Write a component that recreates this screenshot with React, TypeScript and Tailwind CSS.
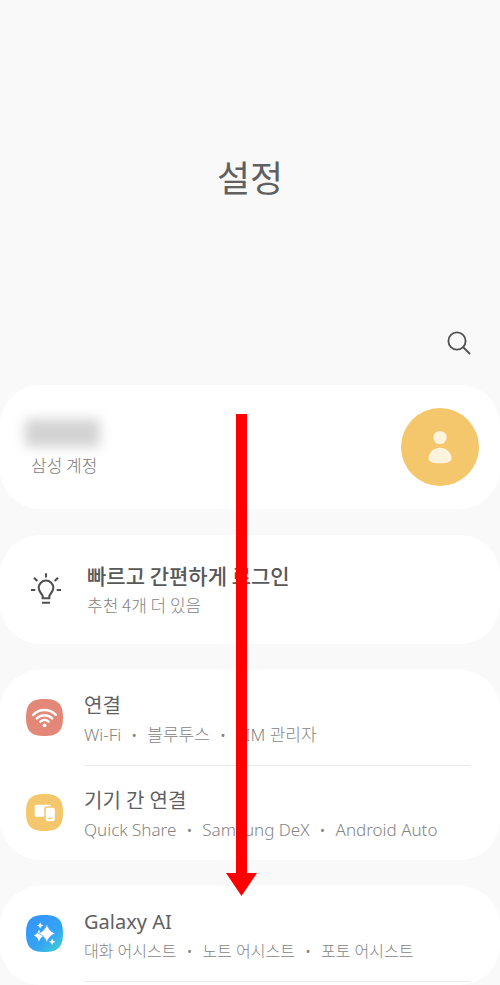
import { Fragment, ReactNode } from "react";

interface SettingItemProps {
  icon: ReactNode;
  title: string;
  details: string[];
  small?: boolean;
  divider?: boolean;
}

function Card({ children, className = "" }: { children: ReactNode; className?: string }) {
  return (
    <section className={`w-full rounded-[40px] bg-white ${className}`}>
      {children}
    </section>
  );
}

function SettingItem({ icon, title, details, small, divider }: SettingItemProps) {
  return (
    <li className="font-['Noto_Sans','Noto_Sans_CJK_KR',sans-serif]">
      <a href="#" className="flex h-[95px] items-center gap-[21px] pl-[26px] pr-[30px]">
        {icon}
        <div className="min-w-0 flex-1 whitespace-nowrap pt-[7px]">
          <p className="text-xl leading-7 font-normal text-[#606060]">{title}</p>
          <p
            className={`flex leading-[30px] text-[#848484] ${
              small ? "text-[16px]" : "text-[17px]"
            }`}
          >
            {details.map((detail, index) => (
              <Fragment key={detail}>
                {index > 0 && <span className="w-[26px] text-center">•</span>}
                <span>{detail}</span>
              </Fragment>
            ))}
          </p>
        </div>
      </a>
      {divider && <hr className="-mb-px ml-[84px] mr-[30px] border-[#ebebeb]" />}
    </li>
  );
}

// rounded "squircle" behind every coloured icon
const TILE = "M18.5 0C32 0 37 5 37 18.5S32 37 18.5 37 0 32 0 18.5 5 0 18.5 0Z";

function WifiIcon() {
  return (
    <svg className="size-[37px] shrink-0" viewBox="0 0 37 37" fill="none">
      <path d={TILE} fill="#e38878" />
      <g stroke="#fff" strokeWidth="2.5" strokeLinecap="round">
        <path d="M7.2 15.8C13.5 9.3 23.5 9.3 29.8 15.8" />
        <path d="M10.8 19.3C15 15.1 22 15.1 26.2 19.3" />
        <path d="M14.4 22.7C16.7 20.5 20.3 20.5 22.6 22.7" />
      </g>
      <circle cx="18.5" cy="26.3" r="1.9" fill="#fff" />
    </svg>
  );
}

function DevicesIcon() {
  return (
    <svg className="size-[37px] shrink-0" viewBox="0 0 37 37" fill="none">
      <path d={TILE} fill="#f5c76c" />
      <rect x="8.7" y="10.8" width="16.5" height="12" rx="1.6" fill="#fff" />
      <rect x="18.2" y="12.2" width="12.2" height="16.5" rx="3.4" fill="#f5c76c" />
      <rect x="19.7" y="13.7" width="9.2" height="13.5" rx="2.2" fill="#fff" />
      <path d="M22.9 24.4h2.8" stroke="#f5c76c" strokeWidth="1.3" strokeLinecap="round" />
    </svg>
  );
}

function GalaxyAiIcon() {
  return (
    <svg className="size-[37px] shrink-0" viewBox="0 0 37 37" fill="none">
      <defs>
        <linearGradient id="galaxy" x1="8" y1="4" x2="34" y2="35" gradientUnits="userSpaceOnUse">
          <stop stopColor="#3397fa" />
          <stop offset="0.6" stopColor="#35a5f5" />
          <stop offset="1" stopColor="#40d0d0" />
        </linearGradient>
      </defs>
      <path d={TILE} fill="url(#galaxy)" />
      <g fill="#fff">
        <path d="M13 14.5Q14.4 19 18.5 20.5Q14.4 22 13 26.5Q11.8 22 8 20.5Q11.8 19 13 14.5Z" />
        <path
          d="M20.8 9.3Q23 16.2 29.4 18.4Q23 20.6 20.8 27.5Q18.6 20.6 12.4 18.4Q18.6 16.2 20.8 9.3Z"
          stroke="#36a1f7"
          strokeWidth="0.7"
        />
        <path d="M14.2 7.2L15.2 9.5L17.5 10.5L15.2 11.5L14.2 13.8L13.2 11.5L10.9 10.5L13.2 9.5Z" />
        <path d="M26.2 23.5L27.2 25.8L29.5 26.8L27.2 27.8L26.2 30.1L25.2 27.8L22.9 26.8L25.2 25.8Z" />
      </g>
    </svg>
  );
}

function BulbIcon() {
  return (
    <svg
      className="size-10 shrink-0"
      viewBox="0 0 40 40"
      fill="none"
      stroke="#505050"
      strokeWidth="2.1"
    >
      <path d="M16.7 28.2V26.3C16.7 24.2 12.7 22.6 12.7 17.8a7.3 7.3 0 0 1 14.6 0C27.3 22.6 23.3 24.2 23.3 26.3V28.2Z" />
      <path d="M16 32.7h8M20 3.3v4.2M8 7.7l3.3 3.3M32 7.7L28.7 11M5 20h4.3M30.7 20H35" />
    </svg>
  );
}

function SearchIcon() {
  return (
    <svg className="size-6" viewBox="0 0 24 24" fill="none" stroke="#505050" strokeWidth="1.8">
      <circle cx="10" cy="10" r="8.6" />
      <path d="M16 16l7 7" />
    </svg>
  );
}

function Avatar() {
  return (
    <svg className="size-[78px] shrink-0" viewBox="0 0 78 78">
      <circle cx="39" cy="39" r="39" fill="#f5c76c" />
      <circle cx="39" cy="29.5" r="6.6" fill="#fef3dd" />
      <path
        d="M39 39.7C46 39.7 50.5 45 50.5 50.5C50.5 54 46 55.3 39 55.3S27.5 54 27.5 50.5C27.5 45 32 39.7 39 39.7Z"
        fill="#fef3dd"
      />
    </svg>
  );
}

function ScrollArrow() {
  return (
    <svg
      className="pointer-events-none absolute left-[226px] top-[414px] h-[482px] w-[31px]"
      viewBox="0 0 31 482"
      fill="#ff0000"
    >
      <path d="M10 0H21V459H31L15.5 482L0 459H10Z" />
    </svg>
  );
}

export default function App() {
  return (
    <main className="relative min-h-screen w-full overflow-hidden bg-[#f9f9f9] font-['Noto_Sans_CJK_KR',sans-serif] font-light">
      <header className="flex flex-col items-center pt-[146px]">
        <h1 className="text-4xl leading-[60px] font-normal text-[#606060]">설정</h1>
        <button type="button" aria-label="검색" className="mt-[125px] mr-[29px] self-end">
          <SearchIcon />
        </button>
      </header>

      <div className="mt-[30px] flex flex-col gap-[26px]">
        <Card>
          <a href="#" className="flex h-[124px] items-center justify-between pl-[25px] pr-[21px]">
            <div className="pt-1">
              <div className="h-7 w-[75px] rounded bg-[#d3d3d3] blur-[6px]" />
              <p className="mt-1 pl-[6px] text-[17px] leading-7 text-[#7c7c7c]">삼성 계정</p>
            </div>
            <Avatar />
          </a>
        </Card>

        <Card>
          <a href="#" className="flex h-[109px] items-center gap-[21px] pl-[26px]">
            <BulbIcon />
            <div>
              <p className="text-[21px] leading-7 font-medium text-[#585858]">
                빠르고 간편하게 로그인
              </p>
              <p className="mt-[2px] text-[17px] leading-7 text-[#848484]">추천 4개 더 있음</p>
            </div>
          </a>
        </Card>

        <Card>
          <ul>
            <SettingItem
              icon={<WifiIcon />}
              title="연결"
              details={["Wi-Fi", "블루투스", "SIM 관리자"]}
              divider
            />
            <SettingItem
              icon={<DevicesIcon />}
              title="기기 간 연결"
              details={["Quick Share", "Samsung DeX", "Android Auto"]}
            />
          </ul>
        </Card>

        <Card className="pb-1">
          <ul>
            <SettingItem
              icon={<GalaxyAiIcon />}
              title="Galaxy AI"
              details={["대화 어시스트", "노트 어시스트", "포토 어시스트"]}
              small
              divider
            />
          </ul>
        </Card>
      </div>

      <ScrollArrow />
    </main>
  );
}
